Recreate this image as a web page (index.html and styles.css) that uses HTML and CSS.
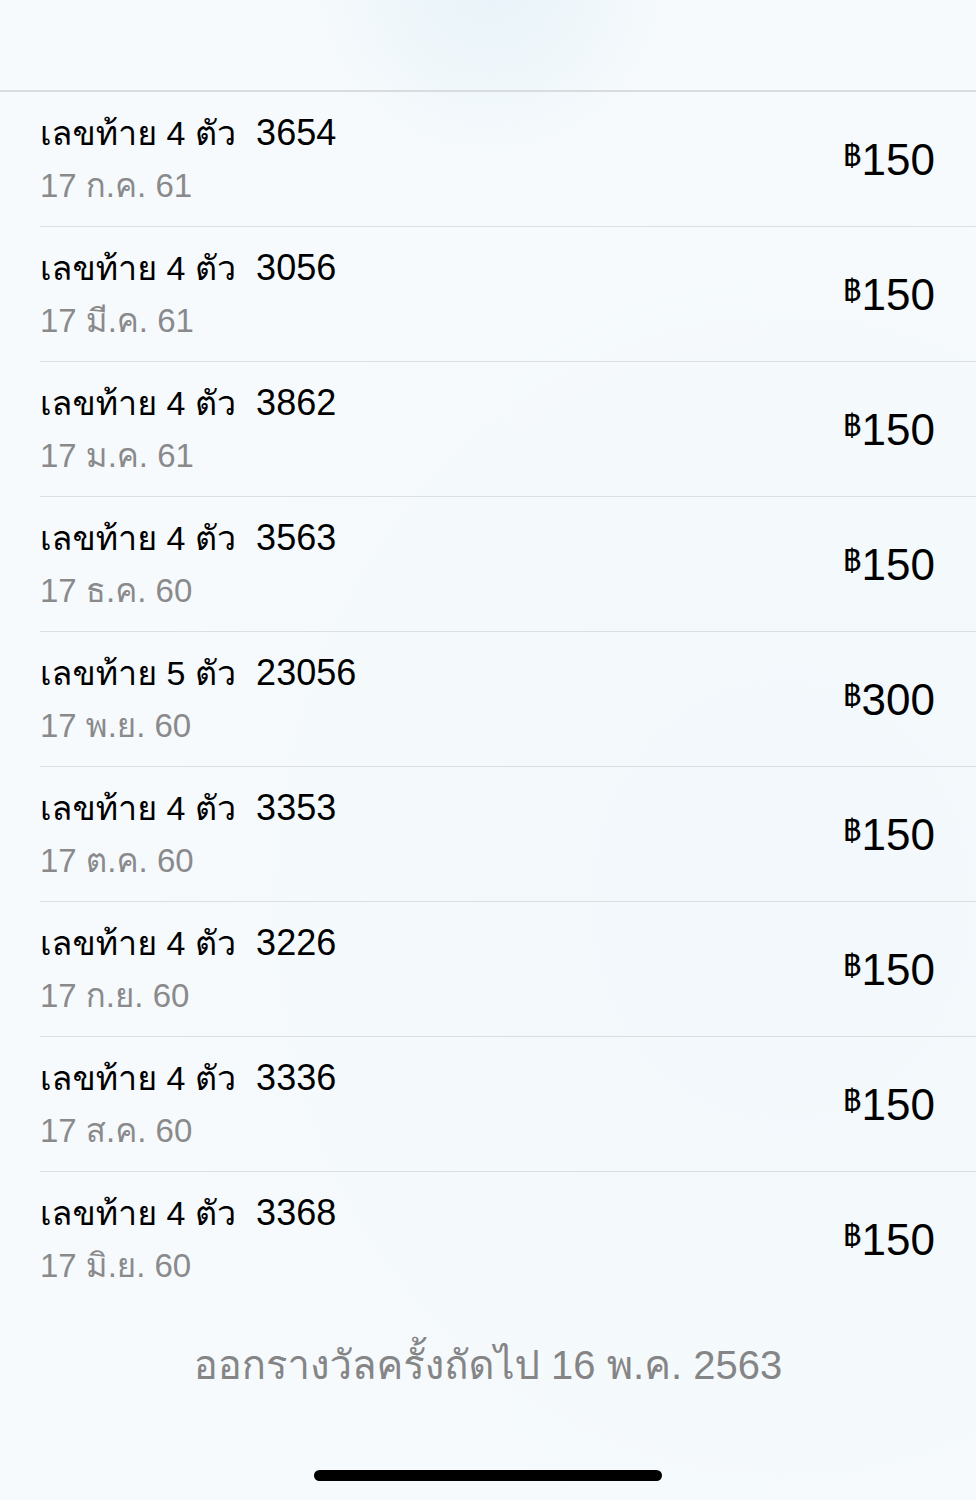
FILE: index.html
```html
<!DOCTYPE html>
<html lang="th">
<head>
<meta charset="utf-8">
<link rel="stylesheet" href="styles.css">
</head>
<body>
<div class="screen">
  <div class="header"></div>
  <ul class="list">
    <li class="row"><div class="info"><div class="title"><span class="th">เลขท้าย 4 ตัว</span>&nbsp;&nbsp;3654</div><div class="date">17 ก.ค. 61</div></div><div class="price"><span class="baht">฿</span>150</div></li>
    <li class="row"><div class="info"><div class="title"><span class="th">เลขท้าย 4 ตัว</span>&nbsp;&nbsp;3056</div><div class="date">17 มี.ค. 61</div></div><div class="price"><span class="baht">฿</span>150</div></li>
    <li class="row"><div class="info"><div class="title"><span class="th">เลขท้าย 4 ตัว</span>&nbsp;&nbsp;3862</div><div class="date">17 ม.ค. 61</div></div><div class="price"><span class="baht">฿</span>150</div></li>
    <li class="row"><div class="info"><div class="title"><span class="th">เลขท้าย 4 ตัว</span>&nbsp;&nbsp;3563</div><div class="date">17 ธ.ค. 60</div></div><div class="price"><span class="baht">฿</span>150</div></li>
    <li class="row"><div class="info"><div class="title"><span class="th">เลขท้าย 5 ตัว</span>&nbsp;&nbsp;23056</div><div class="date">17 พ.ย. 60</div></div><div class="price"><span class="baht">฿</span>300</div></li>
    <li class="row"><div class="info"><div class="title"><span class="th">เลขท้าย 4 ตัว</span>&nbsp;&nbsp;3353</div><div class="date">17 ต.ค. 60</div></div><div class="price"><span class="baht">฿</span>150</div></li>
    <li class="row"><div class="info"><div class="title"><span class="th">เลขท้าย 4 ตัว</span>&nbsp;&nbsp;3226</div><div class="date">17 ก.ย. 60</div></div><div class="price"><span class="baht">฿</span>150</div></li>
    <li class="row"><div class="info"><div class="title"><span class="th">เลขท้าย 4 ตัว</span>&nbsp;&nbsp;3336</div><div class="date">17 ส.ค. 60</div></div><div class="price"><span class="baht">฿</span>150</div></li>
    <li class="row"><div class="info"><div class="title"><span class="th">เลขท้าย 4 ตัว</span>&nbsp;&nbsp;3368</div><div class="date">17 มิ.ย. 60</div></div><div class="price"><span class="baht">฿</span>150</div></li>
  </ul>
  <div class="footer">ออกรางวัลครั้งถัดไป 16 พ.ค. 2563</div>
  <div class="home-bar"><div class="home-indicator"></div></div>
</div>
</body>
</html>
```
FILE: styles.css
```css
html, body {
  margin: 0;
  padding: 0;
}
body {
  width: 976px;
  height: 1500px;
  overflow: hidden;
  font-family: "Liberation Sans", "Loma", "Waree", "Garuda", "Tlwg Typist", "Noto Sans Thai Looped", "Noto Sans Thai", sans-serif;
  background:
    radial-gradient(circle at 490px -20px, rgba(228, 241, 248, 0.8) 0, rgba(234, 244, 250, 0.5) 110px, rgba(245, 250, 252, 0) 180px),
    radial-gradient(ellipse at 80% 60%, rgba(240, 247, 251, 0.7) 0, rgba(246, 250, 252, 0) 60%),
    #f6fafc;
}
.screen {
  display: flex;
  flex-direction: column;
  height: 1500px;
}
.header {
  height: 90px;
  border-bottom: 2px solid #d9dbdc;
}
.list {
  list-style: none;
  margin: 0;
  padding: 0 0 0 40px;
}
.row {
  height: 134px;
  border-bottom: 1px solid #dcdfe0;
  display: flex;
  align-items: center;
  justify-content: space-between;
  padding-right: 41px;
}
.row:last-child {
  border-bottom: none;
}
.info {
  display: flex;
  flex-direction: column;
  gap: 9px;
}
.title {
  font-size: 36px;
  line-height: 44px;
  color: #000;
  white-space: nowrap;
}
.th {
  font-size: 34px;
}
.date {
  font-size: 33px;
  line-height: 44px;
  color: #8a8a8c;
  white-space: nowrap;
}
.price {
  font-size: 44px;
  line-height: 50px;
  color: #000;
  display: flex;
  align-items: flex-start;
  margin-top: 2px;
}
.baht {
  font-size: 30px;
  line-height: 30px;
  margin-top: 6px;
  font-weight: 300;
}
.footer {
  margin-top: 34px;
  text-align: center;
  font-size: 40px;
  line-height: 50px;
  color: #858587;
}
.home-bar {
  flex: 1;
  display: flex;
  justify-content: center;
  align-items: flex-end;
  padding-bottom: 19px;
}
.home-indicator {
  width: 348px;
  height: 11px;
  border-radius: 6px;
  background: #000;
}
```
